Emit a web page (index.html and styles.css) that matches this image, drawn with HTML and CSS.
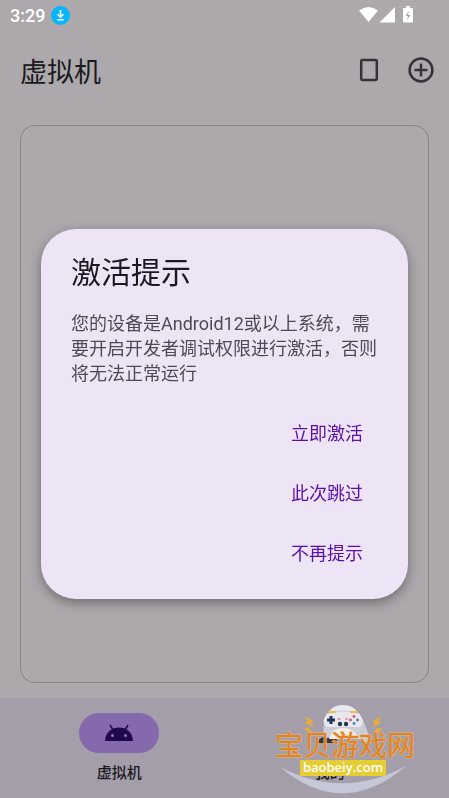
FILE: index.html
```html
<!doctype html>
<html lang="zh-CN">
  <head>
    <meta charset="UTF-8" />
    <meta name="viewport" content="width=device-width, initial-scale=1" />
    <title>虚拟机</title>
    <link rel="stylesheet" href="styles.css">
  </head>
  <body>
    <div class="status-bar">
      <span class="clock">3:29</span>
      <svg class="download" viewBox="0 0 19 19" width="19" height="19">
        <circle cx="9.5" cy="9.5" r="9.5" fill="#08b6fb" />
        <path d="M9.5 4v7M6.5 8.2l3 3 3-3M6.3 13.7h6.4" fill="none" stroke="#fff" stroke-width="1.6" />
      </svg>
      <svg class="signals" viewBox="0 0 56 18" width="56" height="18" fill="#fff">
        <path d="M0 4.5Q9.5-2.5 19 4.5L9.5 16z" />
        <path d="M36 1v15.5H20.5z" />
        <path d="M47 0h4v2h2q1 0 1 1v12.5q0 1-1 1h-8q-1 0-1-1V3q0-1 1-1h2z" />
        <path d="M50 5l-3.5 5H49l-1 4 3.5-5H49z" fill="#aca8ac" />
      </svg>
    </div>

    <header class="app-bar">
      <h1>虚拟机</h1>
      <button class="icon-button" aria-label="屏幕">
        <svg viewBox="0 0 26 26" width="26" height="26">
          <rect x="5.2" y="3" width="15.6" height="20" rx="1.2" />
        </svg>
      </button>
      <button class="icon-button" aria-label="添加">
        <svg viewBox="0 0 26 26" width="26" height="26">
          <circle cx="13" cy="13" r="11.4" />
          <path d="M13 6.5v13M6.5 13h13" />
        </svg>
      </button>
    </header>

    <main class="vm-card"></main>

    <nav class="nav-bar">
      <a class="nav-item active" href="#vm">
        <span class="indicator">
          <svg viewBox="0 0 28 18" width="28" height="18">
            <path d="M0 17C.6 8 6.5 3.5 14 3.5S27.4 8 28 17z" fill="#21094f" />
            <path d="M5 1l3 5M23 1l-3 5" stroke="#21094f" stroke-width="1.5" />
            <circle cx="7.5" cy="11.5" r="1.5" fill="#8e79b5" />
            <circle cx="20.5" cy="11.5" r="1.5" fill="#8e79b5" />
          </svg>
        </span>
        <span>虚拟机</span>
      </a>
      <a class="nav-item" href="#me">
        <span class="indicator">
          <svg viewBox="0 0 28 28" width="28" height="28" fill="#38333d">
            <circle cx="14" cy="9" r="5" />
            <path d="M2 24v-2q2-4 10-5t9 5v2z" />
          </svg>
        </span>
        <span>我的</span>
      </a>
      <svg class="watermark" viewBox="0 0 140 96" width="140" height="96">
        <!-- arc -->
        <path d="M5 65Q68 118 131 64Q68 98 5 65z" fill="#c7c8d7" />
        <!-- gamepad -->
        <path d="M50 24C51 9 57 3 68 3S85 9 87 24z" fill="#e9e8ee" />
        <path d="M52 11Q68 6 84 11C88 16 91 26 96 38C92 42 86 39 80 35H57Q54 36 49 36Q47 22 52 11z" fill="#cdccd9" />
        <path d="M52 12Q68 7 84 12Q91 19 85 25H52Q45 19 52 12z" fill="#e9e8ee" />
        <path d="M54 37Q57 25 69 26T83 37z" fill="#f4efe6" />
        <path d="M53 10h8M75 10h8" stroke="#e9bd55" stroke-width="2" />
        <path d="M56 14v8M52 18h8" stroke="#213557" stroke-width="3" />
        <circle cx="79" cy="14.5" r="1.4" fill="#d45466" />
        <circle cx="79" cy="21.5" r="1.4" fill="#3d83b2" />
        <circle cx="75.5" cy="18" r="1.4" fill="#d45466" />
        <circle cx="82.5" cy="18" r="1.4" fill="#3d83b2" />
        <circle cx="65" cy="22" r="2.2" fill="#26384e" />
        <circle cx="71" cy="22" r="2.2" fill="#26384e" />
        <path d="M62.5 17h3M70 17h3" stroke="#ce5264" />
        <!-- sparks -->
        <g fill="#ecac32">
          <path d="M29 14l9 5-2 3 4 4-10-5 3-2zM29 26l5 0 1 2 3 3-7-2z" />
          <path d="M107 14l-9 5 2 3-4 4 10-5-3-2zM107 26l-5 0-1 2-3 3 7-2z" />
        </g>
        <text class="mark-name" x="0" y="54">宝贝游戏网</text>
        <rect x="25" y="58" width="86" height="16" fill="#e6cd32" />
        <text class="mark-url" x="68" y="70">baobeiy.com</text>
      </svg>
    </nav>

    <div class="overlay">
      <section class="dialog" role="dialog" aria-modal="true" aria-labelledby="dialog-title">
        <h2 id="dialog-title">激活提示</h2>
        <p>您的设备是Android12或以上系统，需要开启开发者调试权限进行激活，否则将无法正常运行</p>
        <div class="actions">
          <button>立即激活</button>
          <button>此次跳过</button>
          <button>不再提示</button>
        </div>
      </section>
    </div>
  </body>
</html>
```
FILE: styles.css
```css
:root {
  --surface: #aca8ac;
  --nav: #a49eaa;
  --dialog: #ede5f6;
  --ink: #1b1820;
  --muted: #4f4957;
  --primary: #5c0fa8;
}

* {
  box-sizing: border-box;
  margin: 0;
  padding: 0;
}

body {
  display: flex;
  flex-direction: column;
  min-height: 100vh;
  font-family: Roboto, "Noto Sans CJK SC", sans-serif;
  color: var(--ink);
  background: var(--surface);
}

button {
  font: inherit;
  border: none;
  background: none;
  cursor: pointer;
}

svg {
  display: block;
}

.status-bar {
  display: flex;
  align-items: center;
  height: 30px;
  padding: 0 34px 0 10px;
  color: #fff;
}

.clock {
  font-size: 18px;
  font-weight: 500;
}

.download {
  margin-left: 6px;
}

.signals {
  margin-left: auto;
}

.app-bar {
  display: flex;
  align-items: center;
  gap: 12px;
  height: 80px;
  padding: 0 8px 0 20px;
}

.app-bar h1 {
  flex: 1;
  font-size: 27px;
  font-weight: 400;
}

.icon-button {
  display: grid;
  place-items: center;
  width: 40px;
  height: 40px;
}

.icon-button svg {
  fill: none;
  stroke: #353039;
  stroke-width: 2.5;
}

.vm-card {
  flex: 1;
  margin: 15px 20px;
  border: 1px solid #87828e;
  border-radius: 15px;
}

.nav-bar {
  position: relative;
  display: flex;
  height: 100px;
  padding: 15px 14px 10px;
  background: var(--nav);
}

.nav-item {
  flex: 1;
  display: flex;
  flex-direction: column;
  align-items: center;
  gap: 9px;
  font-size: 15px;
  line-height: 22px;
  font-weight: 500;
  color: var(--ink);
  text-decoration: none;
}

.indicator {
  display: grid;
  place-items: center;
  width: 80px;
  height: 40px;
  border-radius: 20px;
}

.active .indicator {
  background: #8469ad;
}

.watermark {
  position: absolute;
  right: 34px;
  bottom: 0;
}

.mark-name {
  font-family: "Noto Sans CJK SC", sans-serif;
  font-size: 28px;
  fill: #e08223;
  stroke: #e9b77c;
  stroke-width: 1;
  paint-order: stroke;
}

.mark-url {
  font-family: "Open Sans", sans-serif;
  font-size: 13px;
  font-weight: 600;
  text-anchor: middle;
  fill: #fff;
}

.overlay {
  position: fixed;
  inset: 30px 0 0;
  display: flex;
  align-items: center;
  justify-content: center;
  padding: 0 41px;
}

.dialog {
  width: 100%;
  max-width: 700px;
  padding: 24px 30px 22px;
  border-radius: 35px;
  background: var(--dialog);
  box-shadow: 0 4px 12px rgba(0, 0, 0, 0.35);
}

.dialog h2 {
  font-size: 30px;
  line-height: 40px;
  font-weight: 400;
}

.dialog p {
  margin-top: 18px;
  font-size: 18px;
  line-height: 25px;
  color: var(--muted);
}

.actions {
  display: flex;
  flex-direction: column;
  align-items: flex-end;
  gap: 10px;
  margin-top: 21px;
}

.actions button {
  height: 50px;
  padding: 0 15px;
  font-size: 18px;
  color: var(--primary);
}
```
